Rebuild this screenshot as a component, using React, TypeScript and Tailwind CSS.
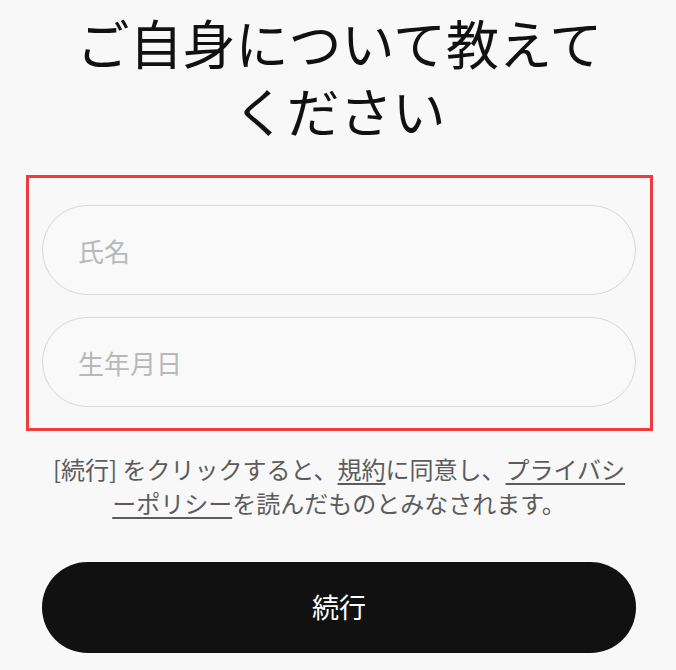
import React from 'react'

const font = { fontFamily: '"Noto Sans CJK JP", "Noto Sans", sans-serif' }

const App = () => {
  return (
    <div
      className="min-h-[670px] w-[676px] bg-[#f8f8f8] pl-[26px] pr-[23px] pt-[8px]"
      style={font}
    >
      <h1 className="text-center text-[53px] font-normal leading-[68px] text-[#111]">
        ご自身について教えて
        <br />
        ください
      </h1>

      {/* form fields, outlined in red */}
      <div className="mt-[31px] flex flex-col gap-[22px] border-[3px] border-[#f03c3c] pb-[21px] pl-[13px] pr-[14px] pt-[27px]">
        <input
          type="text"
          placeholder="氏名"
          className="h-[90px] w-full rounded-full border-[1.5px] border-[#d8d8d8] bg-[#f9f9f9] pl-[35px] text-[26px] text-[#222] outline-none placeholder:text-[#b8b8b8]"
        />
        <input
          type="text"
          placeholder="生年月日"
          className="h-[90px] w-full rounded-full border-[1.5px] border-[#d8d8d8] bg-[#f9f9f9] pl-[35px] text-[26px] text-[#222] outline-none placeholder:text-[#b8b8b8]"
        />
      </div>

      <div className="pl-[16px] pr-[17px]">
        <p className="mt-[21px] text-center text-[24px] leading-[34px] text-[#5c5c5c]">
          [続行] をクリックすると、
          <a className="underline decoration-[1.5px] underline-offset-[4px]">規約</a>
          に同意し、
          <a className="underline decoration-[1.5px] underline-offset-[4px]">
            プライバシ
            <br />
            ーポリシー
          </a>
          を読んだものとみなされます。
        </p>

        <button className="mt-[42px] flex h-[91px] w-full items-center justify-center rounded-full bg-[#111] text-[27px] text-white">
          続行
        </button>
      </div>
    </div>
  )
}

export default App
